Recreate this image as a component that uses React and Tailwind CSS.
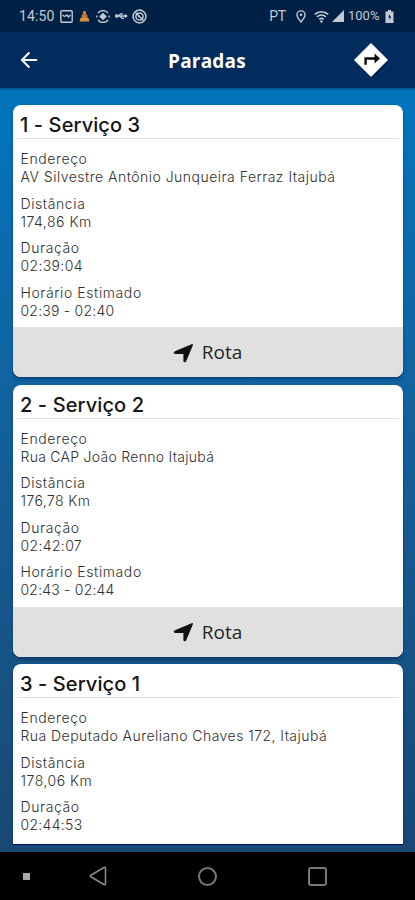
import React from "react";

const body = "font-[Inter,'Open_Sans',sans-serif]";

const stops = [
  {
    title: "1 - Serviço 3",
    rows: [
      ["Endereço", "AV Silvestre Antônio Junqueira Ferraz Itajubá", "tracking-[0.49px]"],
      ["Distância", "174,86 Km", "tracking-[0.5px]"],
      ["Duração", "02:39:04", "tracking-[0.35px]"],
      ["Horário Estimado", "02:39 - 02:40", "tracking-[0.22px]"],
    ],
    action: "Rota",
  },
  {
    title: "2 - Serviço 2",
    rows: [
      ["Endereço", "Rua CAP João Renno Itajubá", "tracking-[0.28px]"],
      ["Distância", "176,78 Km", "tracking-[0.4px]"],
      ["Duração", "02:42:07", "tracking-[0.35px]"],
      ["Horário Estimado", "02:43 - 02:44", "tracking-[0.2px]"],
    ],
    action: "Rota",
  },
  {
    title: "3 - Serviço 1",
    rows: [
      ["Endereço", "Rua Deputado Aureliano Chaves 172, Itajubá", "tracking-[0.45px]"],
      ["Distância", "178,06 Km", "tracking-[0.5px]"],
      ["Duração", "02:44:53", "tracking-[0.3px]"],
    ],
  },
];

function StatusBar() {
  return (
    <div className="flex h-8 shrink-0 items-center bg-[#002145] pl-[19px] pr-[21px] font-[Roboto,sans-serif] text-[#c3cad3]">
      <span className="w-9 text-[14px] leading-8 tracking-[0.1px]">14:50</span>
      <svg className="ml-[5px]" width="13" height="13" viewBox="0 0 13 13" fill="none" stroke="currentColor" strokeWidth="1.4">
        <rect x="0.8" y="0.8" width="11.4" height="11.4" rx="1" />
        <path d="M2.500 5l2 1.500L7 5l1.500 2 2-2" />
      </svg>
      <svg className="ml-[6px]" width="11" height="12" viewBox="0 0 11 12">
        <path d="M4.500 1h2l1 3.500h-4z" fill="#c9874a" />
        <path d="M3 4.500h5l.8 4H2.200z" fill="#c07a38" />
        <path d="M1.500 8h8l1 3.500H.5z" fill="#dc923c" />
      </svg>
      <svg className="ml-[6px]" width="14" height="13" viewBox="0 0 14 13" fill="none" stroke="currentColor" strokeWidth="1.300">
        <path d="M2 3.200a6 6 0 0 1 10 0M2 9.800a6 6 0 0 0 10 0M.8 5.500v2M13.200 5.500v2" />
        <path d="M7 3.600L9.900 6.500 7 9.400 4.100 6.500z" fill="currentColor" />
      </svg>
      <svg className="ml-[5px]" width="13" height="12" viewBox="0 0 13 12" fill="none" stroke="currentColor" strokeWidth="1.300">
        <path d="M1 6h11M3.500 6l2-2.200H8M5 6l2 2.400h2" />
        <circle cx="1.800" cy="6" r="1.200" fill="currentColor" />
        <path d="M9.800 3.800L12.900 6 9.800 8.200z" fill="currentColor" stroke="none" />
      </svg>
      <svg className="ml-[4px]" width="15" height="15" viewBox="0 0 15 15" fill="none" stroke="currentColor" strokeWidth="1.500">
        <circle cx="7.500" cy="7.500" r="6.400" />
        <circle cx="7.500" cy="7.500" r="3.600" />
        <path d="M3.500 3.500l8 8M6 7l3 2" />
      </svg>
      <div className="grow" />
      <span className="text-[14px] leading-8 tracking-[-0.2px]">PT</span>
      <svg className="ml-[10px]" width="10" height="13" viewBox="0 0 10 13" fill="none" stroke="currentColor" strokeWidth="1.400">
        <path d="M5 12C3 9.300 1 7.200 1 4.900a4 4 0 0 1 8 0C9 7.200 7 9.300 5 12z" />
        <circle cx="5" cy="4.800" r="1.300" fill="currentColor" stroke="none" />
      </svg>
      <svg className="ml-[8px]" width="15" height="13" viewBox="0 0 15 13" fill="none" stroke="currentColor" strokeWidth="1.500">
        <path d="M.8 4.400a9.500 9.500 0 0 1 13.400 0M3 7a6.300 6.300 0 0 1 9 0M5.300 9.400a3.200 3.200 0 0 1 4.400 0" />
        <circle cx="7.500" cy="11.500" r="1.200" fill="currentColor" stroke="none" />
      </svg>
      <svg className="ml-[3px]" width="12" height="12" viewBox="0 0 12 12">
        <path d="M12 0v12H0z" fill="currentColor" />
      </svg>
      <span className="ml-[4px] w-8 whitespace-nowrap text-[13px] leading-8">100%</span>
      <svg className="ml-[5px]" width="9" height="13" viewBox="0 0 9 13">
        <path d="M3 0h3v1.500h2.500V13h-8V1.500H3z" fill="currentColor" />
        <path d="M5 4L3 7.500h1.500v2.700L6.300 6.500H5z" fill="#002145" />
      </svg>
    </div>
  );
}

function Header() {
  return (
    <header className="relative z-10 flex h-14 shrink-0 items-center justify-between bg-[#002c5e] pl-5 pr-[26px] shadow-[0_1px_2px_rgba(0,30,70,0.5)]">
      <svg width="18" height="18" viewBox="0 0 18 18" fill="none" stroke="#fff" strokeWidth="2.100">
        <path d="M17.200 9H2M9.300 1.600L2 9l7.300 7.400" />
      </svg>
      <h1 className="ml-[23px] pt-[2px] font-['Open_Sans',sans-serif] text-[19px] font-bold tracking-[0.2px] text-white">Paradas</h1>
      <svg width="36" height="38" viewBox="0 0 36 38">
        <path d="M18.600 4.500L35.500 20.500 18.600 37.500 2 20.500z" fill="#00132c" />
        <path d="M18 2.500L34.500 19 18 35.500 1.500 19z" fill="#fff" stroke="#fff" strokeLinejoin="round" />
        <path d="M12.600 23.800v-6.300h11" fill="none" stroke="#0a0a0a" strokeWidth="2.400" />
        <path d="M21.500 12.500l5.500 5-5.500 5z" fill="#0a0a0a" />
      </svg>
    </header>
  );
}

function StopCard({ stop }) {
  return (
    <article className="h-[272px] shrink-0 overflow-hidden rounded-[8px] bg-white shadow-[0_2px_3px_rgba(0,25,65,0.45)]">
      <h2 className={body + " mx-1 h-[34px] border-b border-[#dedede] pl-[3.500px] pt-[5px] text-[20px] font-medium leading-[30px] tracking-[0.1px] text-[#151515]"}>
        {stop.title}
      </h2>
      <dl className={body + " flex h-[188px] flex-col gap-2 pl-2 pt-[11px] text-[14px] font-light text-[#303030]"}>
        {stop.rows.map(([label, value, tracking]) => (
          <div key={label} className="h-[36.500px] whitespace-nowrap leading-[18.200px]">
            <dt className="tracking-[0.6px]">{label}</dt>
            <dd className={tracking}>{value}</dd>
          </div>
        ))}
      </dl>
      {stop.action && (
        <button className="flex h-[50px] w-full items-center justify-center gap-2 bg-[#e0e0e0] pt-px font-['Open_Sans',sans-serif] text-[19px] text-[#252525]">
          <svg width="21" height="20" viewBox="0 0 21 20">
            <path d="M18.600 1.200q1.800-.4 1.200 1.300L13.300 18q-.5 1.300-1.500 1.300-1.400 0-1.400-1.300v-7H3q-2.300-.1-2.300-1.300 0-1 1.300-1.500z" fill="#101010" />
          </svg>
          {stop.action}
        </button>
      )}
    </article>
  );
}

function NavBar() {
  return (
    <nav className="flex h-12 shrink-0 items-center bg-black pl-[23px] text-[#888]">
      <span className="size-[7px] bg-[#aaa]" />
      <svg className="ml-[59px]" width="18" height="20" viewBox="0 0 18 20" fill="none" stroke="currentColor" strokeWidth="1.600" strokeLinejoin="round">
        <path d="M15 1.500q1.500-.5 1.500 1v15q0 1.500-1.500 1L1.700 10.700q-.8-.7 0-1.400z" />
      </svg>
      <span className="ml-[91px] size-[19px] rounded-full border-2 border-[#777]" />
      <span className="ml-[91px] size-[19px] rounded-[3px] border-2 border-[#777]" />
    </nav>
  );
}

export default function App() {
  return (
    <div className="flex h-[900px] w-[415px] flex-col overflow-hidden">
      <StatusBar />
      <Header />
      <main className="flex h-[764px] shrink-0 flex-col bg-linear-to-b from-[#0075bd] to-[#184873] px-[12.500px] pt-3">
        <div className="-mx-1 flex h-[744px] shrink-0 flex-col gap-[7.600px] overflow-hidden px-1 pt-[5px]">
          {stops.map((stop) => (
            <StopCard key={stop.title} stop={stop} />
          ))}
        </div>
        <div className="h-px shrink-0 bg-[#00105c]" />
      </main>
      <NavBar />
    </div>
  );
}
